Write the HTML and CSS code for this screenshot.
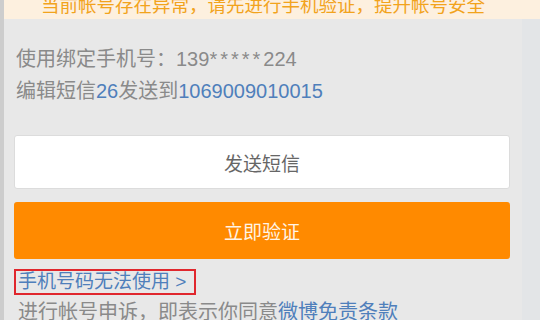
FILE: index.html
```html
<!DOCTYPE html>
<html lang="zh-CN">
<head>
<meta charset="utf-8">
<link rel="stylesheet" href="styles.css">
</head>
<body>
<div class="app">
  <div class="edge-left"></div>
  <div class="main">
    <div class="banner"><p class="banner-text">当前帐号存在异常，请先进行手机验证，提升帐号安全</p></div>
    <div class="content">
      <div class="panel">
        <p class="info">使用绑定手机号：139<span class="stars">*****</span>224</p>
        <p class="info">编辑短信<span class="blue">26</span>发送到<span class="blue">1069009010015</span></p>
        <div class="btn btn-white">发送短信</div>
        <div class="btn btn-orange">立即验证</div>
        <div class="link-row"><span class="link-box">手机号码无法使用 &gt;</span></div>
        <p class="terms">进行帐号申诉，即表示你同意<span class="blue">微博免责条款</span></p>
      </div>
      <div class="edge-right"></div>
    </div>
  </div>
</div>
</body>
</html>
```
FILE: styles.css
```css
html, body {
  margin: 0;
  padding: 0;
}
body {
  width: 540px;
  height: 320px;
  overflow: hidden;
  background: #e8e8e8;
  font-family: "Liberation Sans", "Noto Sans CJK SC", sans-serif;
}
p { margin: 0; }
.app {
  display: flex;
  height: 320px;
}
.edge-left {
  width: 4px;
  flex-shrink: 0;
  background: #cdcdcd;
}
.main {
  flex: 1;
  display: flex;
  flex-direction: column;
  min-width: 0;
}
.banner {
  flex-shrink: 0;
  height: 19px;
  overflow: hidden;
  background: #fdf0df;
  display: flex;
  justify-content: center;
  padding-right: 18px;
}
.banner-text {
  margin-top: -5px;
  font-size: 18.5px;
  line-height: 22px;
  color: #f2a31c;
  white-space: nowrap;
}
.content {
  flex: 1;
  min-height: 0;
  overflow: hidden;
  display: flex;
}
.panel {
  flex: 1;
  padding: 24px 12px 0 10px;
  overflow: hidden;
}
.edge-right {
  width: 18px;
  flex-shrink: 0;
  background: #e3e5e7;
}
.info {
  padding-left: 2px;
  font-size: 20px;
  line-height: 32px;
  color: #8a8a8a;
  white-space: nowrap;
}
.stars {
  letter-spacing: 3px;
}
.blue {
  color: #4f7fbb;
}
.btn {
  display: flex;
  align-items: center;
  justify-content: center;
  border-radius: 3px;
  font-size: 19px;
}
.btn-white {
  margin-top: 28px;
  height: 54px;
  background: #ffffff;
  color: #666666;
  border: 1px solid #dcdcdc;
  box-sizing: border-box;
}
.btn-orange {
  margin-top: 13px;
  height: 57px;
  background: #ff8a00;
  color: #fff4e6;
}
.link-row {
  margin-top: 10px;
  display: flex;
}
.link-box {
  padding: 0 8px 0 2px;
  height: 22px;
  line-height: 22px;
  border: 2px solid #e0272d;
  font-size: 19px;
  color: #4f7fbb;
  white-space: nowrap;
}
.terms {
  margin-top: 4px;
  padding-left: 4px;
  font-size: 20px;
  line-height: 26px;
  color: #8a8a8a;
  white-space: nowrap;
}
```
